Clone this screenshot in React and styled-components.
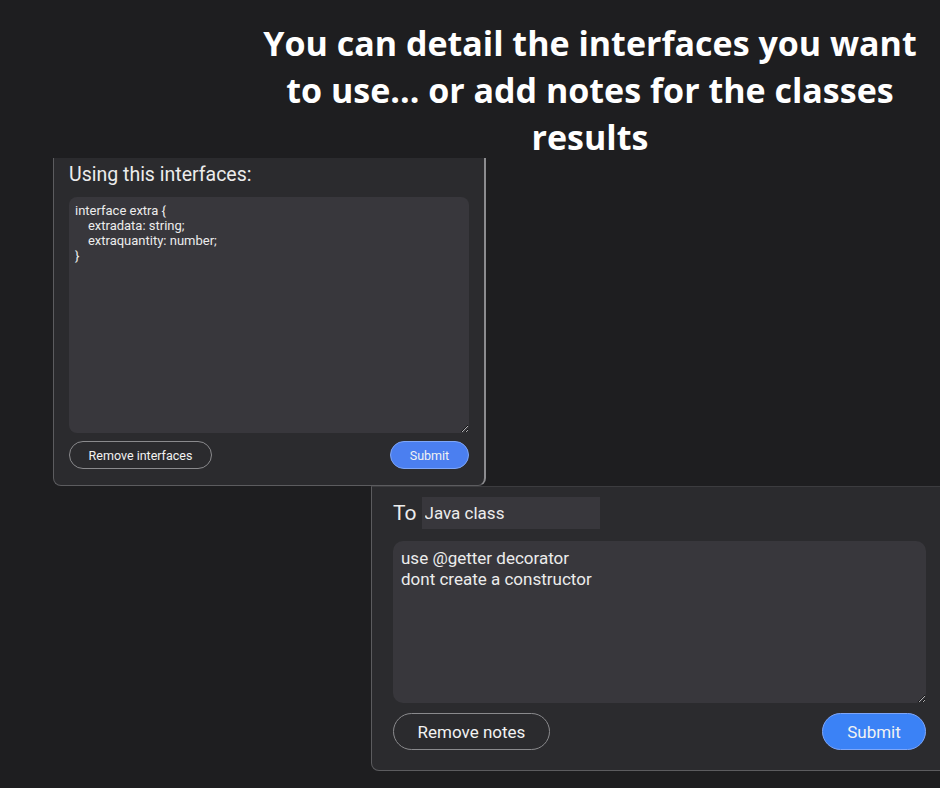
import React from "react";
import styled, { createGlobalStyle } from "styled-components";

const GlobalStyle = createGlobalStyle`
  html, body {
    margin: 0;
    padding: 0;
    background: #1e1e20;
    color-scheme: dark;
  }
  body {
    width: 940px;
    height: 788px;
    overflow: hidden;
  }
`;

const Page = styled.div`
  width: 940px;
  height: 788px;
  overflow: hidden;
  background: #1e1e20;
  display: flex;
  flex-direction: column;
`;

const Heading = styled.h1`
  margin: 0 0 0 250px;
  padding-top: 20px;
  width: 680px;
  height: 158px;
  box-sizing: border-box;
  flex-shrink: 0;

  font-family: "Open Sans", sans-serif;
  font-weight: 700;
  font-size: 34px;
  line-height: 47px;
  color: #ffffff;
  text-align: center;
`;

const Panel = styled.section`
  box-sizing: border-box;
  margin-left: ${(p) => p.$left}px;
  width: ${(p) => p.$width}px;
  height: ${(p) => p.$height}px;
  padding: ${(p) => p.$pad};
  flex-shrink: 0;

  display: flex;
  flex-direction: column;
  background: #2b2b2e;
  border: 1px solid #5c5c5f;
  border-top: ${(p) => (p.$noTop ? "none" : "1px solid #3c3c3f")};
  border-right-color: ${(p) => p.$rightColor || "#5c5c5f"};
  border-right-width: ${(p) => p.$rightWidth || 1}px;
  border-radius: 0 0 8px 8px;
  font-family: Roboto, "Noto Sans", sans-serif;
  color: #ececec;
`;

const Title = styled.div`
  font-size: 19.5px;
  line-height: 24px;
  margin-bottom: 10px;
`;

const TargetRow = styled.div`
  display: flex;
  align-items: center;
  gap: 5px;
  margin-bottom: 12px;
  flex-shrink: 0;
`;

const TargetLabel = styled.span`
  font-size: 21px;
  line-height: 32px;
`;

const TargetInput = styled.input`
  box-sizing: border-box;
  width: 178px;
  height: 32px;
  padding: 0 3px;
  border: none;
  outline: none;
  background: #38373c;
  color: #ececec;
  font-family: Roboto, "Noto Sans", sans-serif;
  font-size: 17px;
`;

const Notes = styled.textarea`
  box-sizing: border-box;
  display: block;
  flex-shrink: 0;
  width: 100%;
  height: ${(p) => p.$height}px;
  margin: 0;
  padding: ${(p) => p.$pad};
  border: none;
  outline: none;
  resize: vertical;
  border-radius: ${(p) => p.$radius}px;
  background: #38373c;
  color: #ececec;
  font-family: Roboto, "Noto Sans", sans-serif;
  font-size: ${(p) => p.$size}px;
  line-height: ${(p) => p.$line}px;
  white-space: pre;
  overflow: hidden;
`;

const Actions = styled.div`
  display: flex;
  justify-content: space-between;
  align-items: center;
  flex-shrink: 0;
  margin-top: ${(p) => p.$gap}px;
`;

const Button = styled.button`
  box-sizing: border-box;
  width: ${(p) => p.$width}px;
  height: ${(p) => p.$height}px;
  padding: 0;
  border-radius: ${(p) => p.$height / 2}px;
  font-family: Roboto, "Noto Sans", sans-serif;
  font-size: ${(p) => p.$size}px;
  cursor: pointer;
  color: #f2f2f2;
  background: ${(p) => (p.$primary ? p.$blue : "transparent")};
  border: 1px solid ${(p) => (p.$primary ? "#7ea6f8" : "#8a8a8d")};
`;

const interfaceText = `interface extra {
    extradata: string;
    extraquantity: number;
}`;

const notesText = `use @getter decorator
dont create a constructor`;

export default function App() {
  return (
    <Page>
      <GlobalStyle />
      <Heading>
        You can detail the interfaces you want
        <br />
        to use... or add notes for the classes
        <br />
        results
      </Heading>

      <Panel
        $left={53}
        $width={433}
        $height={328}
        $pad="5px 15px 16px 15px"
        $noTop
        $rightColor="#8c8c8f"
        $rightWidth={2}
      >
        <Title>Using this interfaces:</Title>
        <Notes
          readOnly
          defaultValue={interfaceText}
          $height={236}
          $pad="6px 6px"
          $radius={8}
          $size={13}
          $line={15}
        />
        <Actions $gap={8}>
          <Button $width={143} $height={28} $size={12.5}>
            Remove interfaces
          </Button>
          <Button $primary $blue="#4b7ff0" $width={79} $height={28} $size={12.5}>
            Submit
          </Button>
        </Actions>
      </Panel>

      <Panel $left={371} $width={580} $height={285} $pad="10px 24px 20px 21px">
        <TargetRow>
          <TargetLabel>To</TargetLabel>
          <TargetInput readOnly defaultValue="Java class" />
        </TargetRow>
        <Notes
          readOnly
          defaultValue={notesText}
          $height={162}
          $pad="7px 8px"
          $radius={10}
          $size={17}
          $line={21}
        />
        <Actions $gap={10}>
          <Button $width={157} $height={37} $size={17}>
            Remove notes
          </Button>
          <Button $primary $blue="#3b82f6" $width={104} $height={37} $size={17}>
            Submit
          </Button>
        </Actions>
      </Panel>
    </Page>
  );
}
